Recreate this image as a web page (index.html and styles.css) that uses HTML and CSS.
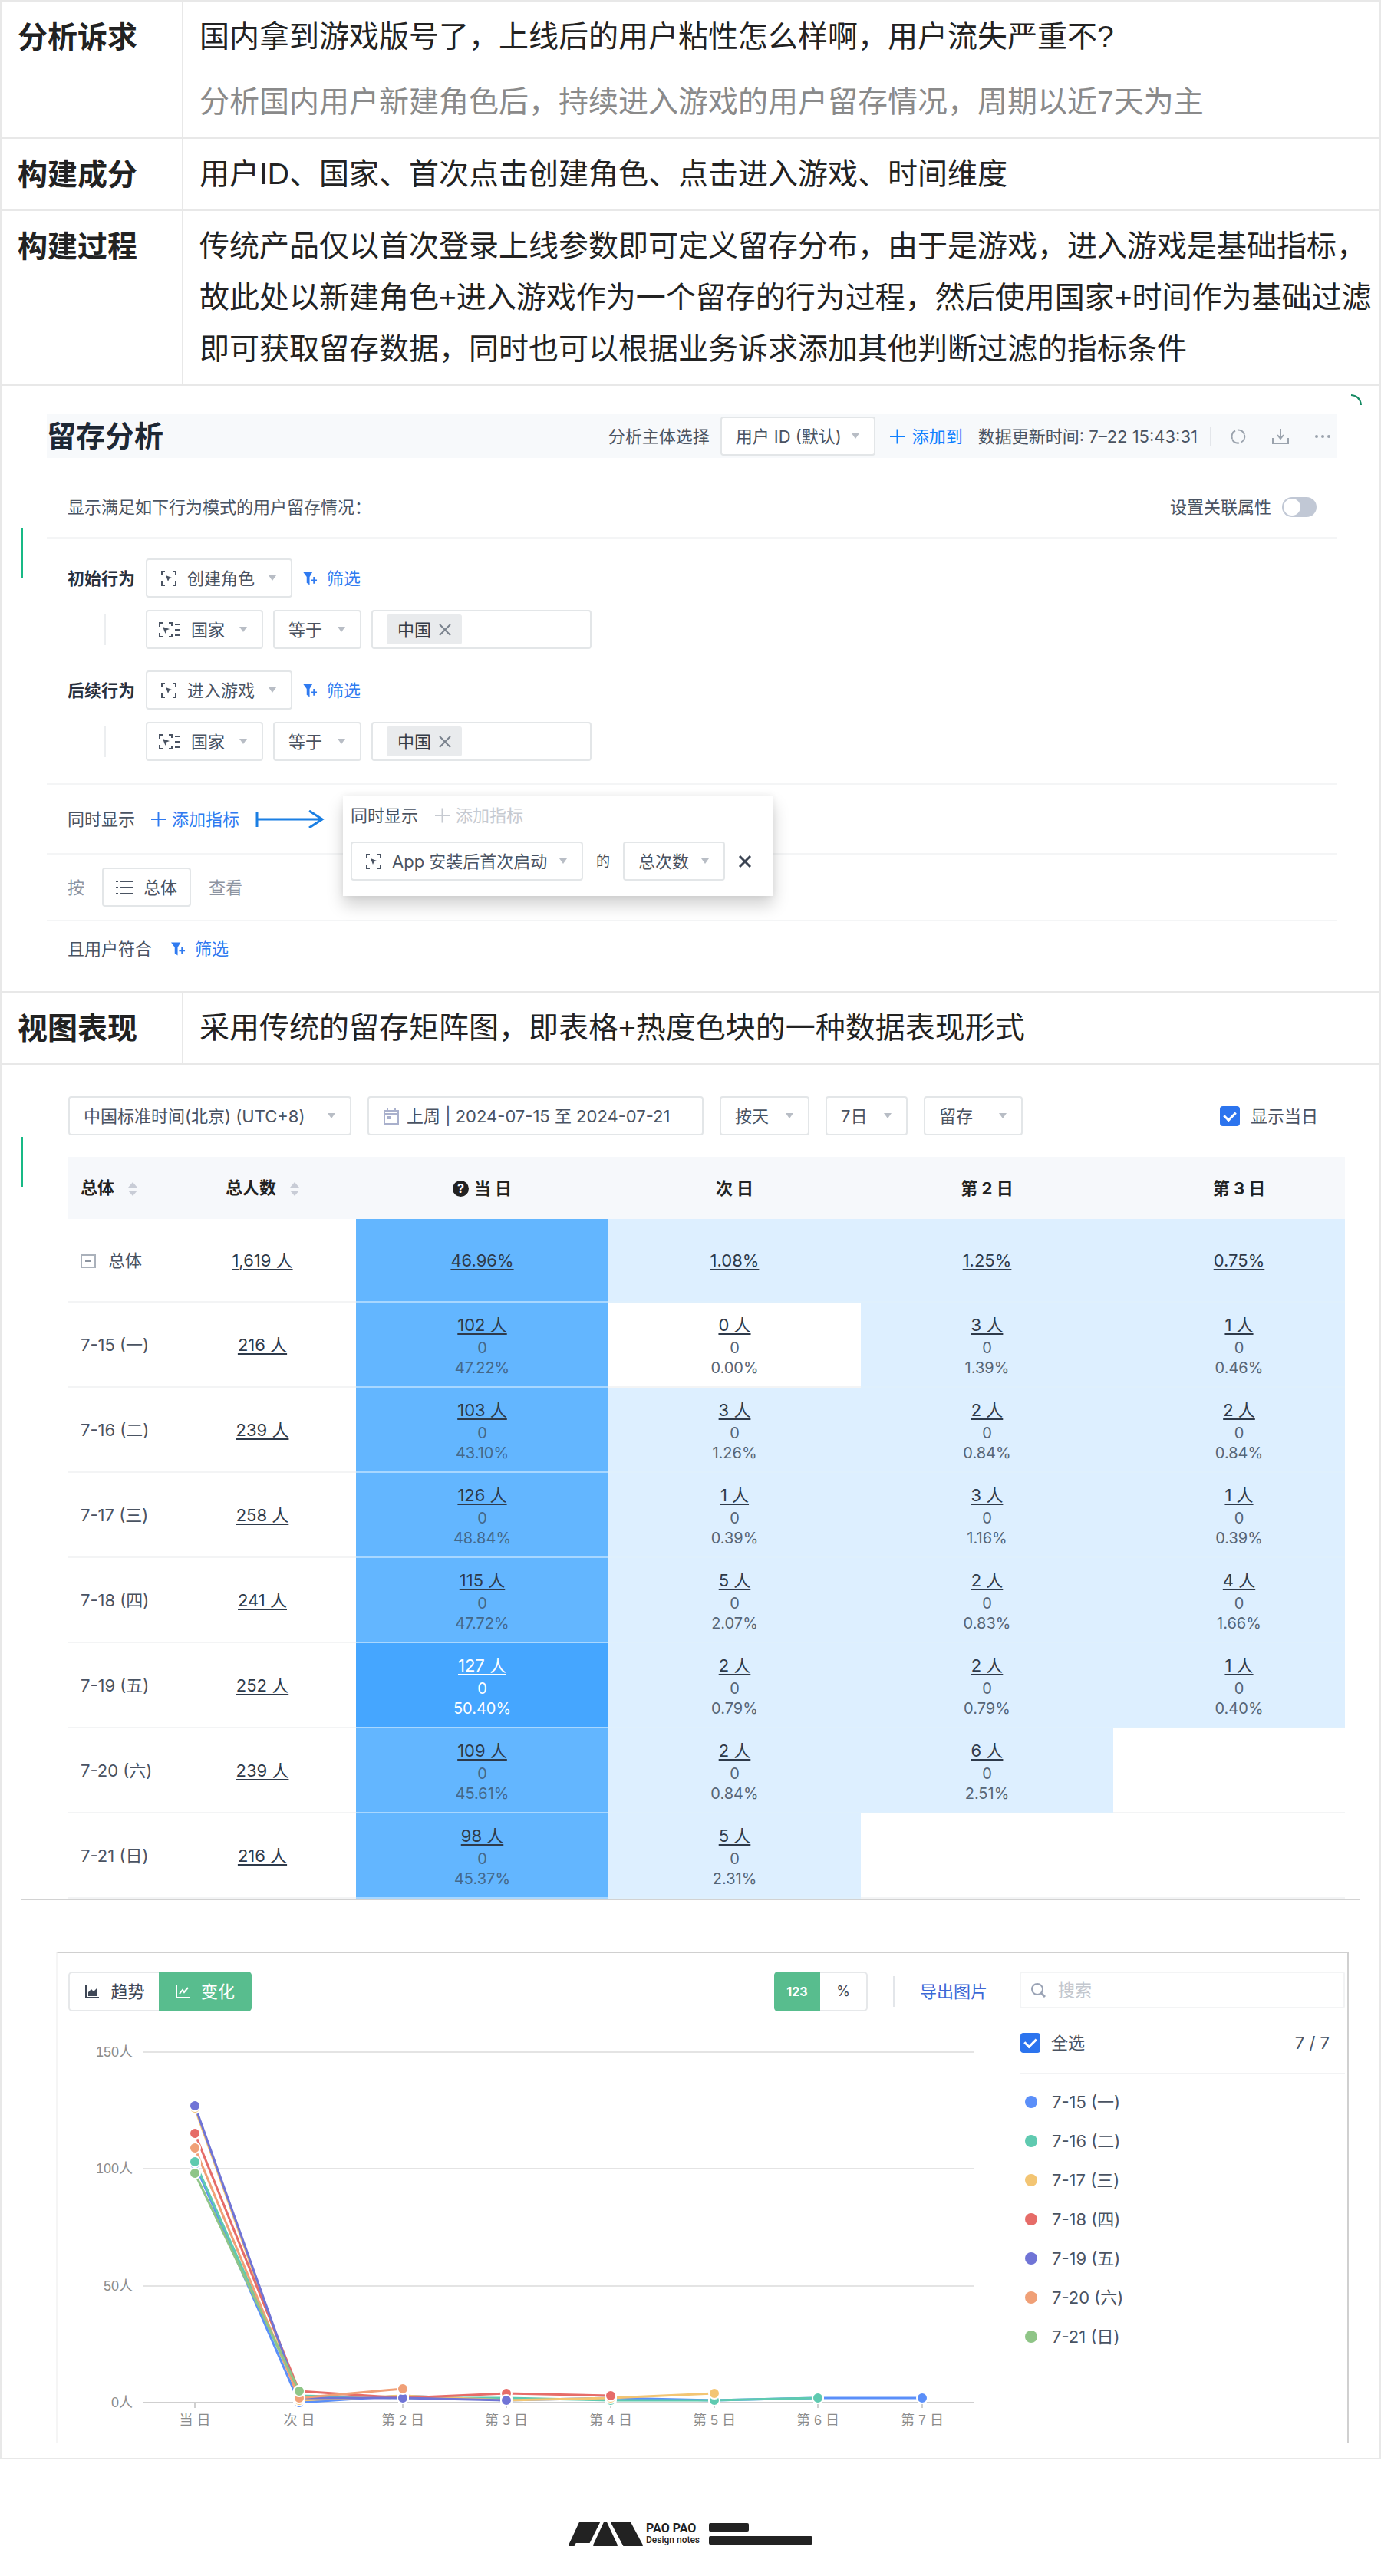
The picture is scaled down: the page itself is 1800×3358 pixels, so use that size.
FILE: index.html
```html
<!DOCTYPE html>
<html lang="zh-CN">
<head>
  <meta charset="UTF-8" />
  <meta name="viewport" content="width=device-width, initial-scale=1.0"/>
  <title>留存分析</title>
  <link rel="stylesheet" href="styles.css">
</head>
<body>

  <!-- Iconos compartidos -->
  <svg class="sprite" aria-hidden="true">
    <symbol id="i-event" viewBox="0 0 20 20">
      <path d="M1 6V1h4M15 1h4v5M19 14v5h-4M5 19H1v-5" fill="none" stroke="currentColor" stroke-width="2"/>
      <path d="M6 6l8 3-3.500 1.500L9 14z" fill="currentColor"/>
    </symbol>
    <symbol id="i-prop" viewBox="0 0 28 20">
      <path d="M1 6V1h4M13 1h4v4M17 15v4h-4M5 19H1v-5M21 3h7M21 10h7M21 17h7" fill="none" stroke="currentColor" stroke-width="2"/>
      <path d="M5 6l9 3-4 1.500L8.500 15z" fill="currentColor"/>
    </symbol>
    <symbol id="i-filter" viewBox="0 0 20 20">
      <path d="M0 1h13L9 8v11l-4-3V8z" fill="currentColor"/>
      <path d="M15 8v9M11 12.500h8" stroke="currentColor" stroke-width="2"/>
    </symbol>
    <symbol id="i-plus" viewBox="0 0 20 20">
      <path d="M10 0v20M0 10h20" stroke="currentColor" stroke-width="2"/>
    </symbol>
    <symbol id="i-sort" viewBox="0 0 12 20">
      <path d="M6 1l6 7H0zM6 19l6-7H0z" fill="currentColor"/>
    </symbol>
  </svg>

  <table class="doc">
    <tr>
      <th scope="row">分析诉求</th>
      <td>
        <p>国内拿到游戏版号了，上线后的用户粘性怎么样啊，用户流失严重不?</p>
        <p class="note">分析国内用户新建角色后，持续进入游戏的用户留存情况，周期以近7天为主</p>
      </td>
    </tr>
    <tr>
      <th scope="row">构建成分</th>
      <td><p>用户ID、国家、首次点击创建角色、点击进入游戏、时间维度</p></td>
    </tr>
    <tr>
      <th scope="row">构建过程</th>
      <td><p>传统产品仅以首次登录上线参数即可定义留存分布，由于是游戏，进入游戏是基础指标，<br>故此处以新建角色+进入游戏作为一个留存的行为过程，然后使用国家+时间作为基础过滤<br>即可获取留存数据，同时也可以根据业务诉求添加其他判断过滤的指标条件</p></td>
    </tr>

    <!-- Configuración del análisis -->
    <tr>
      <td colspan="2" class="shot">
        <section class="builder">
          <i class="mark"></i>
          <svg class="corner" viewBox="0 0 16 16"><path d="M1 1q12 1 13 13" fill="none" stroke="#168a63" stroke-width="2"/></svg>
          <header class="builder-head">
            <h2>留存分析</h2>
            <label for="subject">分析主体选择</label>
            <span class="select w-subject"><select id="subject"><option>用户 ID (默认)</option></select></span>
            <button class="link bright"><svg><use href="#i-plus"/></svg>添加到</button>
            <span class="updated">数据更新时间: 7–22 15:43:31</span>
            <span class="vline"></span>
            <button class="tool" aria-label="刷新"><svg viewBox="0 0 22 22"><path d="M3 14a8.500 8.500 0 0 1 4-10.500M10 2.500a8.500 8.500 0 0 1 9 6M19 9a8.500 8.500 0 0 1-4 9.500M12 19.500a8.500 8.500 0 0 1-9-5" fill="none" stroke="currentColor" stroke-width="2"/></svg></button>
            <button class="tool" aria-label="下载"><svg viewBox="0 0 22 22"><path d="M11 1v12M7 9l4 5 4-5M1 13v7h20v-7" fill="none" stroke="currentColor" stroke-width="2"/></svg></button>
            <button class="tool" aria-label="更多"><svg viewBox="0 0 22 22"><g fill="currentColor"><circle cx="3" cy="11" r="2"/><circle cx="11" cy="11" r="2"/><circle cx="19" cy="11" r="2"/></g></svg></button>
          </header>

          <div class="line intro">
            <span>显示满足如下行为模式的用户留存情况：</span>
            <label class="switch">设置关联属性<input type="checkbox" role="switch"></label>
          </div>

          <div class="behaviors">
            <div class="behavior">
              <div class="row">
                <label class="strong" for="first">初始行为</label>
                <span class="select w-event"><svg><use href="#i-event"/></svg><select id="first"><option>创建角色</option></select></span>
                <button class="link"><svg><use href="#i-filter"/></svg>筛选</button>
              </div>
              <div class="row cond">
                <i class="bar"></i>
                <span class="select w-prop"><svg class="wide"><use href="#i-prop"/></svg><select aria-label="属性"><option>国家</option></select></span>
                <span class="select w-op"><select aria-label="条件"><option>等于</option></select></span>
                <span class="tags"><span class="tag">中国<button aria-label="删除"><svg viewBox="0 0 16 16"><path d="M1 1l14 14M15 1L1 15" stroke="#7a828d" stroke-width="2"/></svg></button></span><input type="text" aria-label="值"></span>
              </div>
            </div>
            <div class="behavior">
              <div class="row">
                <label class="strong" for="next">后续行为</label>
                <span class="select w-event"><svg><use href="#i-event"/></svg><select id="next"><option>进入游戏</option></select></span>
                <button class="link"><svg><use href="#i-filter"/></svg>筛选</button>
              </div>
              <div class="row cond">
                <i class="bar"></i>
                <span class="select w-prop"><svg class="wide"><use href="#i-prop"/></svg><select aria-label="属性"><option>国家</option></select></span>
                <span class="select w-op"><select aria-label="条件"><option>等于</option></select></span>
                <span class="tags"><span class="tag">中国<button aria-label="删除"><svg viewBox="0 0 16 16"><path d="M1 1l14 14M15 1L1 15" stroke="#7a828d" stroke-width="2"/></svg></button></span><input type="text" aria-label="值"></span>
              </div>
            </div>
          </div>

          <div class="line metrics">
            <span>同时显示</span>
            <button class="link add"><svg><use href="#i-plus"/></svg>添加指标</button>
            <svg class="arrow" viewBox="0 0 90 24"><path d="M2 2v20M2 12h84M70 1l17 11-17 11" fill="none" stroke="#1b7fe3" stroke-width="3"/></svg>
            <div class="popup">
              <div class="popup-head">同时显示 <button class="link add" disabled><svg><use href="#i-plus"/></svg>添加指标</button></div>
              <div class="popup-row">
                <span class="select w-app"><svg><use href="#i-event"/></svg><select aria-label="事件"><option>App 安装后首次启动</option></select></span>
                <span class="of">的</span>
                <span class="select w-count"><select aria-label="指标"><option>总次数</option></select></span>
                <button class="close" aria-label="关闭"><svg viewBox="0 0 18 18"><path d="M2 2l14 14M16 2L2 16" stroke="currentColor" stroke-width="3"/></svg></button>
              </div>
            </div>
          </div>

          <div class="line group">
            <span class="soft">按</span>
            <button class="box-btn"><svg viewBox="0 0 22 20"><path d="M0 2h3M0 10h3M0 18h3M6 2h16M6 10h16M6 18h16" stroke="currentColor" stroke-width="2"/></svg>总体</button>
            <span class="soft">查看</span>
          </div>

          <div class="line last">
            <span>且用户符合</span>
            <button class="link"><svg><use href="#i-filter"/></svg>筛选</button>
          </div>
        </section>
      </td>
    </tr>

    <tr>
      <th scope="row">视图表现</th>
      <td><p>采用传统的留存矩阵图，即表格+热度色块的一种数据表现形式</p></td>
    </tr>

    <!-- Matriz de retención y gráfico -->
    <tr>
      <td colspan="2" class="shot">
        <section class="result">
          <i class="mark"></i>
          <div class="matrix-wrap">
            <div class="filters">
              <span class="select w-tz"><select aria-label="时区"><option>中国标准时间(北京) (UTC+8)</option></select></span>
              <button class="box-btn date"><svg viewBox="0 0 20 22"><path d="M1 4h18v17H1zM1 8h18M5 1v4M15 1v4" fill="none" stroke="#a9b0cc" stroke-width="2"/><path d="M5 11h4v4H5z" fill="#a9b0cc"/></svg>上周 | 2024-07-15 至 2024-07-21</button>
              <span class="select w-unit"><select aria-label="粒度"><option>按天</option></select></span>
              <span class="select w-days"><select aria-label="天数"><option>7日</option></select></span>
              <span class="select w-kind"><select aria-label="类型"><option>留存</option></select></span>
              <label class="check today"><input type="checkbox" checked>显示当日</label>
            </div>

            <table class="matrix">
              <colgroup><col class="c-name"><col class="c-total"><col class="c-day"><col class="c-day"><col class="c-day"><col></colgroup>
              <thead>
                <tr>
                  <th class="name">总体<svg><use href="#i-sort"/></svg></th>
                  <th>总人数<svg><use href="#i-sort"/></svg></th>
                  <th><i class="help">?</i>当 日</th>
                  <th>次 日</th>
                  <th>第 2 日</th>
                  <th>第 3 日</th>
                </tr>
              </thead>
              <tbody>
                <tr class="sum">
                  <td class="name"><i class="fold"></i>总体</td><td><a href="#">1,619 人</a></td>
                  <td class="mid"><a href="#">46.96%</a></td><td class="low"><a href="#">1.08%</a></td><td class="low"><a href="#">1.25%</a></td><td class="low"><a href="#">0.75%</a></td>
                </tr>
                <tr>
                  <td class="name">7-15 (一)</td><td><a href="#">216 人</a></td>
                  <td class="mid"><a href="#">102 人</a><small>0</small><small>47.22%</small></td>
                  <td><a href="#">0 人</a><small>0</small><small>0.00%</small></td>
                  <td class="low"><a href="#">3 人</a><small>0</small><small>1.39%</small></td>
                  <td class="low"><a href="#">1 人</a><small>0</small><small>0.46%</small></td>
                </tr>
                <tr>
                  <td class="name">7-16 (二)</td><td><a href="#">239 人</a></td>
                  <td class="mid"><a href="#">103 人</a><small>0</small><small>43.10%</small></td>
                  <td class="low"><a href="#">3 人</a><small>0</small><small>1.26%</small></td>
                  <td class="low"><a href="#">2 人</a><small>0</small><small>0.84%</small></td>
                  <td class="low"><a href="#">2 人</a><small>0</small><small>0.84%</small></td>
                </tr>
                <tr>
                  <td class="name">7-17 (三)</td><td><a href="#">258 人</a></td>
                  <td class="mid"><a href="#">126 人</a><small>0</small><small>48.84%</small></td>
                  <td class="low"><a href="#">1 人</a><small>0</small><small>0.39%</small></td>
                  <td class="low"><a href="#">3 人</a><small>0</small><small>1.16%</small></td>
                  <td class="low"><a href="#">1 人</a><small>0</small><small>0.39%</small></td>
                </tr>
                <tr>
                  <td class="name">7-18 (四)</td><td><a href="#">241 人</a></td>
                  <td class="mid"><a href="#">115 人</a><small>0</small><small>47.72%</small></td>
                  <td class="low"><a href="#">5 人</a><small>0</small><small>2.07%</small></td>
                  <td class="low"><a href="#">2 人</a><small>0</small><small>0.83%</small></td>
                  <td class="low"><a href="#">4 人</a><small>0</small><small>1.66%</small></td>
                </tr>
                <tr>
                  <td class="name">7-19 (五)</td><td><a href="#">252 人</a></td>
                  <td class="high"><a href="#">127 人</a><small>0</small><small>50.40%</small></td>
                  <td class="low"><a href="#">2 人</a><small>0</small><small>0.79%</small></td>
                  <td class="low"><a href="#">2 人</a><small>0</small><small>0.79%</small></td>
                  <td class="low"><a href="#">1 人</a><small>0</small><small>0.40%</small></td>
                </tr>
                <tr>
                  <td class="name">7-20 (六)</td><td><a href="#">239 人</a></td>
                  <td class="mid"><a href="#">109 人</a><small>0</small><small>45.61%</small></td>
                  <td class="low"><a href="#">2 人</a><small>0</small><small>0.84%</small></td>
                  <td class="low"><a href="#">6 人</a><small>0</small><small>2.51%</small></td>
                  <td></td>
                </tr>
                <tr>
                  <td class="name">7-21 (日)</td><td><a href="#">216 人</a></td>
                  <td class="mid"><a href="#">98 人</a><small>0</small><small>45.37%</small></td>
                  <td class="low"><a href="#">5 人</a><small>0</small><small>2.31%</small></td>
                  <td></td>
                  <td></td>
                </tr>
              </tbody>
            </table>
          </div>

          <div class="chart-box">
            <div class="chart-main">
              <div class="chart-bar">
                <div class="tabs">
                  <button><svg viewBox="0 0 18 18"><path d="M1 1v16h17" fill="none" stroke="currentColor" stroke-width="2"/><path d="M4 15v-5l4-4 3 3 5-5v11z" fill="currentColor"/></svg>趋势</button>
                  <button class="on"><svg viewBox="0 0 18 18"><path d="M1 1v16h17M5 12l4-5 2 3 5-6" fill="none" stroke="currentColor" stroke-width="2"/></svg>变化</button>
                </div>
                <div class="tabs unit">
                  <button class="on">123</button>
                  <button>%</button>
                </div>
                <span class="vline tall"></span>
                <button class="link export">导出图片</button>
              </div>
              <svg class="chart" viewBox="0 0 1200 530" role="img" aria-label="留存变化">
                <g stroke="#e4e4e4" stroke-width="2">
                  <path d="M98 29h1082M98 181h1082M98 334h1082"/>
                  <path d="M98 486h1082M165 486v7M301 486v7M436 486v7M571 486v7M707 486v7M842 486v7M977 486v7M1113 486v7" stroke="#cfcfcf"/>
                </g>
                <g class="axis" text-anchor="end">
                  <text x="84" y="35">150人</text><text x="84" y="187">100人</text><text x="84" y="340">50人</text><text x="84" y="492">0人</text>
                </g>
                <g class="axis" text-anchor="middle">
                  <text x="165" y="515">当 日</text><text x="301" y="515">次 日</text><text x="436" y="515">第 2 日</text><text x="571" y="515">第 3 日</text>
                  <text x="707" y="515">第 4 日</text><text x="842" y="515">第 5 日</text><text x="977" y="515">第 6 日</text><text x="1113" y="515">第 7 日</text>
                </g>
                <g fill="none" stroke-width="3" stroke-linejoin="round">
                  <path stroke="#5b8ff9" d="M165 175L301 486 436 477 571 483 707 480 842 483 977 480 1113 480"/>
                  <path stroke="#5fcab0" d="M165 172L301 477 436 480 571 480 707 483 842 483 977 480"/>
                  <path stroke="#f3c573" d="M165 102L301 483 436 477 571 483 707 480 842 474"/>
                  <path stroke="#e66c68" d="M165 135L301 471 436 480 571 474 707 477"/>
                  <path stroke="#7074d6" d="M165 99L301 480 436 480 571 483"/>
                  <path stroke="#f0a077" d="M165 154L301 480 436 468"/>
                  <path stroke="#8fc587" d="M165 187L301 471"/>
                </g>
                <g stroke="#fff" stroke-width="2">
                  <g fill="#5b8ff9"><circle cx="165" cy="175" r="7"/><circle cx="301" cy="486" r="7"/><circle cx="436" cy="477" r="7"/><circle cx="571" cy="483" r="7"/><circle cx="707" cy="480" r="7"/><circle cx="842" cy="483" r="7"/><circle cx="977" cy="480" r="7"/><circle cx="1113" cy="480" r="7"/></g>
                  <g fill="#5fcab0"><circle cx="165" cy="172" r="7"/><circle cx="301" cy="477" r="7"/><circle cx="436" cy="480" r="7"/><circle cx="571" cy="480" r="7"/><circle cx="707" cy="483" r="7"/><circle cx="842" cy="483" r="7"/><circle cx="977" cy="480" r="7"/></g>
                  <g fill="#f3c573"><circle cx="165" cy="102" r="7"/><circle cx="301" cy="483" r="7"/><circle cx="436" cy="477" r="7"/><circle cx="571" cy="483" r="7"/><circle cx="707" cy="480" r="7"/><circle cx="842" cy="474" r="7"/></g>
                  <g fill="#e66c68"><circle cx="165" cy="135" r="7"/><circle cx="301" cy="471" r="7"/><circle cx="436" cy="480" r="7"/><circle cx="571" cy="474" r="7"/><circle cx="707" cy="477" r="7"/></g>
                  <g fill="#7074d6"><circle cx="165" cy="99" r="7"/><circle cx="301" cy="480" r="7"/><circle cx="436" cy="480" r="7"/><circle cx="571" cy="483" r="7"/></g>
                  <g fill="#f0a077"><circle cx="165" cy="154" r="7"/><circle cx="301" cy="480" r="7"/><circle cx="436" cy="468" r="7"/></g>
                  <g fill="#8fc587"><circle cx="165" cy="187" r="7"/><circle cx="301" cy="471" r="7"/></g>
                </g>
              </svg>
            </div>

            <aside class="legend">
              <label class="search"><svg viewBox="0 0 20 20"><circle cx="9" cy="9" r="7" fill="none" stroke="#9aa3b5" stroke-width="2"/><path d="M14 14l5 5" stroke="#9aa3b5" stroke-width="3"/></svg><input type="search" placeholder="搜索" aria-label="搜索"></label>
              <div class="all"><label class="check"><input type="checkbox" checked>全选</label><span>7 / 7</span></div>
              <ul>
                <li class="s1">7-15 (一)</li>
                <li class="s2">7-16 (二)</li>
                <li class="s3">7-17 (三)</li>
                <li class="s4">7-18 (四)</li>
                <li class="s5">7-19 (五)</li>
                <li class="s6">7-20 (六)</li>
                <li class="s7">7-21 (日)</li>
              </ul>
            </aside>
          </div>
        </section>
      </td>
    </tr>
  </table>

  <footer class="footer">
    <svg class="logo" viewBox="0 0 97 32">
      <g fill="#222" stroke="#222" stroke-width="2" stroke-linejoin="round">
        <path d="M15 1h25L27 27H9l-2 4H1z"/>
        <path d="M47 1h2l14 30H33z"/>
        <path d="M56 1h24l16 30H72z"/>
      </g>
    </svg>
    <div class="brand"><b>PAO PAO</b><span>Design notes</span></div>
    <div class="bars"><i></i><i></i></div>
  </footer>

</body>
</html>
```

FILE: styles.css
```css
* {
  box-sizing: border-box;
}

body {
  margin: 0;
  background: #fff;
  color: #222;
  font-family: Inter, "Noto Sans CJK SC", sans-serif;
}

button,
select,
input {
  font: inherit;
  color: inherit;
  background: none;
  border: 0;
  margin: 0;
  padding: 0;
}

button {
  cursor: pointer;
}

p,
h2,
ul {
  margin: 0;
  padding: 0;
}

.sprite {
  display: none;
}

/* Tabla principal del documento */
.doc {
  width: 100%;
  border-collapse: collapse;
}

.doc > tbody > tr > th,
.doc > tbody > tr > td {
  border: 2px solid #e8e8e8;
  padding: 12px 0 13px 21px;
  text-align: left;
  vertical-align: top;
  font-size: 39px;
  line-height: 67px;
}

.doc > tbody > tr > th {
  width: 237px;
  font-weight: bold;
  white-space: nowrap;
}

.doc p {
  font-family: "Liberation Sans", "Noto Sans CJK SC", sans-serif;
}

.doc .note {
  margin-top: 18px;
  color: #8a8a8a;
}

.doc > tbody > tr > td.shot {
  padding: 0;
  font-size: 22px;
  line-height: 24px;
}

.mark {
  position: absolute;
  left: 25px;
  width: 3px;
  height: 65px;
  background: #18b985;
}

/* Controles comunes */
.select,
.box-btn,
.tags {
  display: flex;
  align-items: center;
  height: 51px;
  padding: 0 19px 0 18px;
  background: #fff;
  border: 2px solid #e3e6e8;
  border-radius: 4px;
  color: #4a5362;
}

.select {
  flex: none;
}

.select::after {
  content: "";
  border: 5px solid transparent;
  border-top: 7px solid #b8bdc5;
  border-bottom: 0;
}

.select select {
  appearance: none;
  flex: 1;
  min-width: 0;
}

.select svg {
  flex: none;
  width: 20px;
  height: 20px;
  margin-right: 14px;
}

.select svg.wide {
  width: 28px;
}

.w-subject { width: 202px; }
.w-event { width: 191px; }
.w-prop { width: 153px; padding-left: 15px; }
.w-op { width: 115px; }
.w-app { width: 303px; }
.w-count { width: 133px; }
.w-tz { width: 369px; }
.w-unit { width: 117px; }
.w-days { width: 107px; }
.w-kind { width: 129px; }

.link {
  display: flex;
  align-items: center;
  gap: 12px;
  color: #2f7af0;
  white-space: nowrap;
}

.link svg {
  width: 19px;
  height: 20px;
}

.link.bright {
  color: #0f80ff;
  gap: 10px;
}

.link.add {
  gap: 8px;
}

.link:disabled {
  color: #c6cad1;
}

.vline {
  width: 2px;
  height: 26px;
  background: #e3e6ea;
}

.vline.tall {
  height: 40px;
}

.check {
  display: flex;
  align-items: center;
  gap: 14px;
}

.check input {
  appearance: none;
  width: 26px;
  height: 26px;
  border-radius: 4px;
  background: #2c74ee;
  display: grid;
  place-items: center;
}

.check input:checked::after {
  content: "";
  width: 7px;
  height: 12px;
  margin-top: -3px;
  border: solid #fff;
  border-width: 0 3px 3px 0;
  transform: rotate(45deg);
}

/* Constructor del análisis */
.builder {
  position: relative;
  padding: 37px 55px 19px 59px;
  color: #4a5362;
}

.builder .mark {
  top: 185px;
}

.corner {
  position: absolute;
  top: 11px;
  right: 22px;
  width: 16px;
  height: 16px;
}

.builder-head {
  display: flex;
  align-items: center;
  height: 57px;
  padding-right: 8px;
  background: #f7f9fb;
}

.builder-head h2 {
  flex: 1;
  font-size: 38px;
  line-height: 57px;
  color: #1e2835;
}

.builder-head .select {
  margin: 0 19px 0 14px;
}

.updated {
  margin: 0 16px 0 20px;
  white-space: nowrap;
}

.tool {
  width: 22px;
  height: 22px;
  margin-left: 33px;
  color: #9ba3ad;
}

.vline + .tool {
  margin-left: 24px;
}

.tool svg {
  display: block;
}

.line {
  display: flex;
  align-items: center;
  padding: 0 27px;
  border-bottom: 2px solid #f4f5f6;
}

.intro {
  height: 105px;
  padding-top: 24px;
  justify-content: space-between;
}

.switch {
  display: flex;
  align-items: center;
  gap: 14px;
}

.switch input {
  appearance: none;
  width: 45px;
  height: 26px;
  padding: 2px;
  border-radius: 13px;
  background: #c1c8d5;
}

.switch input::before {
  content: "";
  display: block;
  width: 22px;
  height: 22px;
  border-radius: 50%;
  background: #fff;
}

.behaviors {
  display: flex;
  flex-direction: column;
  gap: 28px;
  padding: 26px 27px 29px;
  border-bottom: 2px solid #f4f5f6;
}

.behavior {
  display: flex;
  flex-direction: column;
  gap: 16px;
}

.row {
  display: flex;
  align-items: center;
  gap: 14px;
}

.row .strong {
  font-weight: bold;
  color: #28313f;
}

.cond {
  gap: 13px;
}

.bar {
  width: 2px;
  height: 40px;
  margin: 0 39px 0 48px;
  background: #eceef0;
}

.tags {
  width: 287px;
}

.tags input {
  flex: 1;
  min-width: 0;
}

.tag {
  display: flex;
  align-items: center;
  gap: 10px;
  height: 39px;
  padding: 0 14px;
  border-radius: 3px;
  background: #e9ebed;
  color: #333c48;
}

.tag button,
.tag svg {
  display: block;
  width: 16px;
  height: 16px;
}

.metrics {
  position: relative;
  height: 91px;
  gap: 21px;
}

.arrow {
  width: 90px;
  height: 24px;
}

.popup {
  position: absolute;
  top: 14px;
  left: 386px;
  width: 561px;
  padding: 14px 10px 20px;
  background: #fff;
  box-shadow: 0 12px 20px rgba(0, 0, 0, 0.18), 0 0 8px rgba(0, 0, 0, 0.06);
  z-index: 2;
}

.popup-head {
  display: flex;
  gap: 22px;
  margin-bottom: 22px;
}

.popup-row {
  display: flex;
  align-items: center;
  gap: 17px;
}

.of {
  font-size: 18px;
}

.close,
.close svg {
  display: block;
  width: 18px;
  height: 18px;
  color: #3b4453;
}

.group {
  height: 87px;
}

.soft {
  color: #8d94a1;
}

.box-btn svg {
  width: 22px;
  height: 22px;
  margin-right: 14px;
}

.group .box-btn {
  padding: 0 16px;
  margin: 0 23px;
}

.last {
  height: 72px;
  gap: 25px;
  border: 0;
}

/* Matriz */
.result {
  position: relative;
  padding: 41px 25px 20px;
  color: #4a5362;
}

.result .mark {
  top: 94px;
}

.matrix-wrap {
  padding: 0 20px 0 62px;
  border-bottom: 2px solid #d2d2d2;
}

.filters {
  display: flex;
  align-items: center;
  gap: 21px;
  margin-bottom: 28px;
}

.date {
  width: 438px;
}

.date svg {
  margin-right: 9px;
}

.today {
  margin-left: auto;
  margin-right: 35px;
}

.matrix {
  width: 100%;
  table-layout: fixed;
  border-collapse: separate;
  border-spacing: 0;
  text-align: center;
}

.c-name { width: 131px; }
.c-total { width: 244px; }
.c-day { width: 329px; }

.matrix th {
  height: 81px;
  padding: 0;
  background: #f6f8fb;
  color: #222;
}

.matrix th svg {
  width: 12px;
  height: 22px;
  margin-left: 18px;
  color: #c8ccd6;
  vertical-align: middle;
}

.matrix td {
  height: 111px;
  padding: 0;
  border-bottom: 2px solid #f3f4f5;
}

.matrix .sum td {
  height: 109px;
}

.matrix th:last-child,
.matrix td:last-child {
  padding-left: 26px;
}

.matrix .name {
  padding-left: 16px;
  text-align: left;
  white-space: nowrap;
}

.matrix a {
  color: #2e3a4a;
  line-height: 34px;
  text-underline-offset: 3px;
}

.matrix small {
  display: block;
  font-size: 20px;
  line-height: 26px;
  color: #566576;
}

.matrix .mid {
  background: #63b6ff;
  border-color: #a8d7ff;
}

.matrix .mid small {
  color: #44688a;
}

.matrix .high {
  background: #45a6ff;
  border-color: #a8d7ff;
}

.matrix .high a,
.matrix .high small {
  color: #fff;
}

.matrix .low {
  background: #ddefff;
  border-color: #dff0fd;
}

.help {
  display: inline-block;
  width: 21px;
  margin-right: 7px;
  border-radius: 50%;
  background: #222;
  color: #fff;
  font-size: 16px;
  line-height: 21px;
  font-style: normal;
  vertical-align: 2px;
}

.fold {
  display: inline-block;
  width: 20px;
  height: 18px;
  margin-right: 16px;
  border: 2px solid #aab1bb;
  background: linear-gradient(#8d95a0, #8d95a0) center / 8px 2px no-repeat;
  vertical-align: -2px;
}

/* Gráfico */
.chart-box {
  display: flex;
  gap: 40px;
  margin: 67px 15px 0 46px;
  padding: 24px 3px 8px 14px;
  border: solid #d0d0d0;
  border-width: 2px 2px 0;
  border-left-color: #f5f5f5;
}

.chart-main {
  flex: 1;
  min-width: 0;
}

.chart-bar {
  display: flex;
  align-items: center;
  margin-bottom: 24px;
}

.tabs {
  display: flex;
  height: 52px;
  border: 2px solid #e6e8ea;
  border-radius: 5px;
}

.tabs button {
  display: flex;
  align-items: center;
  justify-content: center;
  gap: 15px;
  width: 118px;
  color: #3f4756;
}

.tabs svg {
  width: 18px;
  height: 20px;
}

.tabs .on {
  margin: -2px;
  width: 121px;
  background: #58bd8e;
  color: #fff;
  border-radius: 0 5px 5px 0;
}

.tabs.unit {
  margin-left: auto;
}

.unit button {
  width: 60px;
  font-size: 18px;
}

.unit .on {
  width: 60px;
  margin-right: 0;
  border-radius: 5px 0 0 5px;
  font-size: 16px;
  font-weight: bold;
}

.chart-bar .vline {
  margin: 0 33px;
}

.export {
  margin-right: 2px;
  color: #3c68d6;
}

.chart {
  display: block;
  width: 100%;
}

.axis {
  font-family: "Liberation Sans", "Noto Sans CJK SC", sans-serif;
  font-size: 18px;
  fill: #8c8c8c;
}

.legend {
  width: 424px;
}

.search {
  display: flex;
  align-items: center;
  gap: 16px;
  height: 48px;
  padding: 0 12px;
  border: 2px solid #f3f4f5;
  border-radius: 3px;
}

.search svg {
  width: 20px;
  height: 20px;
}

.search input {
  flex: 1;
  min-width: 0;
}

.search input::placeholder {
  color: #c3c7ce;
}

.all {
  display: flex;
  align-items: center;
  justify-content: space-between;
  height: 86px;
  padding: 6px 20px 0 1px;
  border-bottom: 2px solid #f2f3f4;
}

.legend ul {
  margin-top: 10px;
  list-style: none;
}

.legend li {
  display: flex;
  align-items: center;
  gap: 19px;
  height: 51px;
  padding-left: 7px;
}

.legend li::before {
  content: "";
  width: 16px;
  height: 16px;
  border-radius: 50%;
  background: currentColor;
}

.s1::before { color: #5b8ff9; }
.s2::before { color: #5fcab0; }
.s3::before { color: #f3c573; }
.s4::before { color: #e66c68; }
.s5::before { color: #7074d6; }
.s6::before { color: #f0a077; }
.s7::before { color: #8fc587; }

/* Pie */
.footer {
  display: flex;
  justify-content: center;
  align-items: center;
  padding: 81px 0 40px;
}

.logo {
  width: 97px;
  height: 32px;
}

.brand {
  display: flex;
  flex-direction: column;
  width: 86px;
  padding-left: 4px;
  font-family: Roboto, sans-serif;
  font-size: 12px;
  line-height: 15px;
  font-weight: 500;
  white-space: nowrap;
}

.brand b {
  font-size: 16px;
  line-height: 17px;
}

.bars {
  width: 135px;
}

.bars i {
  display: block;
  width: 52px;
  height: 11px;
  border-radius: 2px;
  background: #222;
}

.bars i + i {
  width: 135px;
  margin-top: 6px;
}
```
